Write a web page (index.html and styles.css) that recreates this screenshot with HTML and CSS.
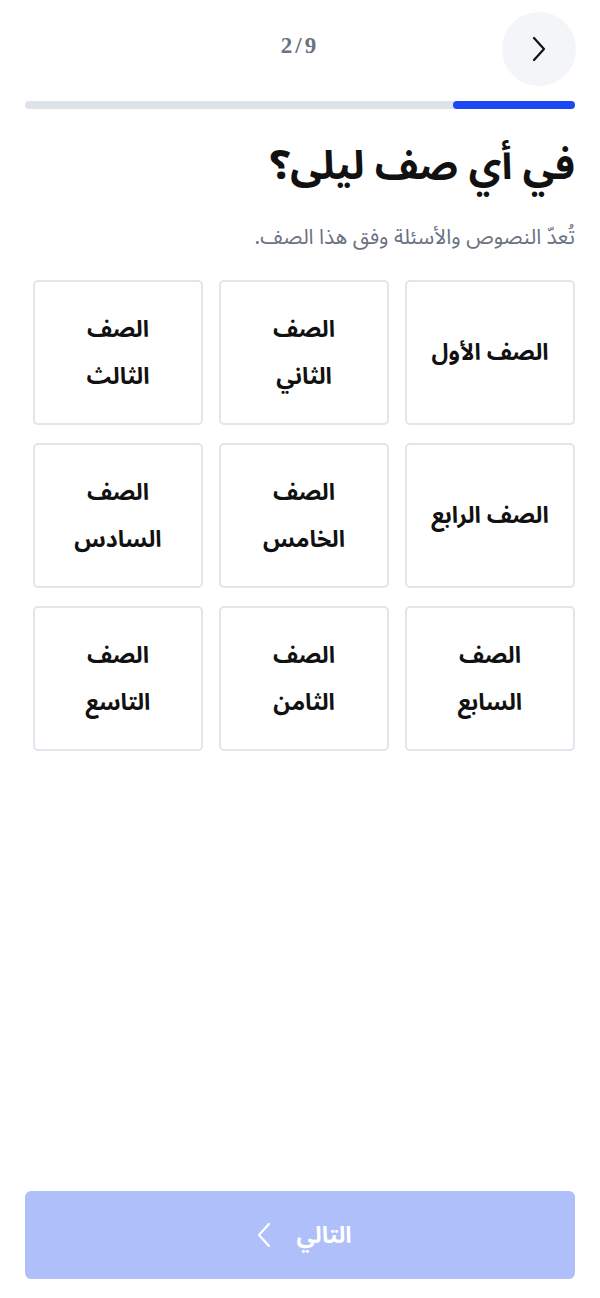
FILE: index.html
```html
<!DOCTYPE html>
<html lang="ar" dir="rtl">
<head>
    <meta charset="UTF-8">
    <meta name="viewport" content="width=device-width, initial-scale=1.0">
    <title>اختيار الصف</title>
    <link rel="stylesheet" href="styles.css">
</head>
<body>
    <div class="page">
        <header class="top-bar">
            <button class="next-circle" type="button" aria-label="التالي">
                <svg width="16" height="26" viewBox="0 0 16 26" fill="none">
                    <path d="M3 2 L13 13 L3 24" stroke="#111" stroke-width="2.2" stroke-linecap="round" stroke-linejoin="round"/>
                </svg>
            </button>
            <div class="counter" dir="ltr">2/9</div>
            <div></div>
        </header>

        <div class="progress">
            <div class="progress-fill" style="width: 22.2%;"></div>
        </div>

        <h1 class="question">في أي صف ليلى؟</h1>
        <p class="hint">تُعدّ النصوص والأسئلة وفق هذا الصف.</p>

        <div class="grade-grid">
            <div class="grade-card">الصف الأول</div>
            <div class="grade-card">الصف الثاني</div>
            <div class="grade-card">الصف الثالث</div>
            <div class="grade-card">الصف الرابع</div>
            <div class="grade-card">الصف الخامس</div>
            <div class="grade-card">الصف السادس</div>
            <div class="grade-card">الصف السابع</div>
            <div class="grade-card">الصف الثامن</div>
            <div class="grade-card">الصف التاسع</div>
        </div>

        <footer class="footer">
            <button class="next-btn" type="button">
                <span>التالي</span>
                <svg width="16" height="26" viewBox="0 0 16 26" fill="none">
                    <path d="M13 2 L3 13 L13 24" stroke="#fff" stroke-width="2.2" stroke-linecap="round" stroke-linejoin="round"/>
                </svg>
            </button>
        </footer>
    </div>
</body>
</html>
```

FILE: styles.css
```css
* {
    margin: 0;
    padding: 0;
    box-sizing: border-box;
}
body {
    font-family: 'Noto Sans Arabic', 'Noto Sans', 'DejaVu Sans', sans-serif;
    background-color: #fff;
    color: #111;
}
.page {
    min-height: 100vh;
    display: flex;
    flex-direction: column;
}
.top-bar {
    display: grid;
    grid-template-columns: 74px 1fr 74px;
    align-items: center;
    margin-top: 12px;
    padding: 0 24px;
    height: 74px;
}
.next-circle {
    width: 74px;
    height: 74px;
    border-radius: 50%;
    border: none;
    background-color: #f3f5f8;
    display: flex;
    align-items: center;
    justify-content: center;
}
.counter {
    text-align: center;
    font-family: 'Liberation Serif', serif;
    font-weight: bold;
    font-size: 23px;
    letter-spacing: 3px;
    color: #6b7280;
    margin-top: -6px;
}
.progress {
    margin: 15px 25px 0;
    height: 8px;
    border-radius: 4px;
    background-color: #dee2e9;
    overflow: hidden;
}
.progress-fill {
    height: 100%;
    background-color: #1a48f5;
    border-radius: 4px 0 0 4px;
}
.question {
    margin: 30px 25px 0;
    font-size: 40px;
    font-weight: bold;
    line-height: 56px;
}
.hint {
    margin: 28px 25px 0;
    font-size: 21px;
    line-height: 28px;
    color: #6b7280;
}
.grade-grid {
    display: grid;
    grid-template-columns: repeat(3, 170px);
    grid-auto-rows: 145px;
    gap: 18px 16px;
    margin: 29px 25px 0;
}
.grade-card {
    border: 2px solid #e2e5ec;
    border-radius: 5px;
    display: flex;
    align-items: center;
    justify-content: center;
    text-align: center;
    padding: 0 23px;
    font-size: 23px;
    font-weight: bold;
    line-height: 47px;
}
.footer {
    margin-top: auto;
    padding: 0 25px 19px;
}
.next-btn {
    width: 100%;
    height: 88px;
    border: none;
    border-radius: 6px;
    background-color: #aebffa;
    color: #fff;
    font-family: inherit;
    font-size: 23px;
    font-weight: bold;
    display: flex;
    align-items: center;
    justify-content: center;
    gap: 24px;
    padding-left: 8px;
}
```
